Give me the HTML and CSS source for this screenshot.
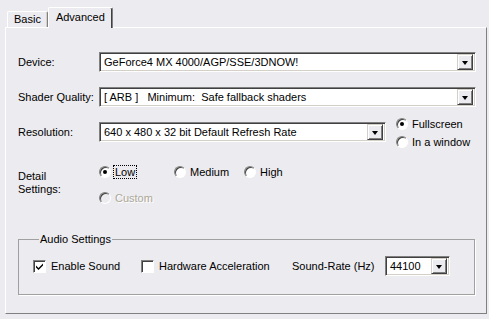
FILE: index.html
```html
<!DOCTYPE html>
<html lang="en">
<head>
  <meta charset="UTF-8" />
  <title>Advanced Settings</title>
  <link rel="stylesheet" href="styles.css">
</head>
<body>
  <div class="tabs">
    <div class="tab">Basic</div>
    <div class="tab active">Advanced</div>
  </div>
  <div class="panel">
    <div class="row first">
      <span class="label">Device:</span>
      <div class="combo wide"><span class="value">GeForce4 MX 4000/AGP/SSE/3DNOW!</span><span class="drop"></span></div>
    </div>
    <div class="row">
      <span class="label">Shader Quality:</span>
      <div class="combo wide"><span class="value">[ ARB ] &nbsp;&nbsp;Minimum: &nbsp;Safe fallback shaders</span><span class="drop"></span></div>
    </div>
    <div class="row res">
      <span class="label">Resolution:</span>
      <div class="combo mid"><span class="value">640 x 480 x 32 bit Default Refresh Rate</span><span class="drop"></span></div>
      <div class="mode">
        <label class="opt"><span class="radio on"></span>Fullscreen</label>
        <label class="opt"><span class="radio"></span>In a window</label>
      </div>
    </div>
    <div class="detail">
      <span class="label">Detail<br>Settings:</span>
      <div class="levels">
        <div class="level-row">
          <label class="opt low"><span class="radio on"></span><span class="focus">Low</span></label>
          <label class="opt med"><span class="radio"></span>Medium</label>
          <label class="opt"><span class="radio"></span>High</label>
        </div>
        <label class="opt disabled"><span class="radio"></span>Custom</label>
      </div>
    </div>
    <fieldset class="audio">
      <legend>Audio Settings</legend>
      <label class="check-opt sound"><span class="check on">
        <svg width="9" height="9" viewBox="0 0 9 9"><path d="M1 3.5 L3.5 6 L8 1.5 L8 3.5 L3.5 8 L1 5.5 Z" fill="#000"/></svg>
      </span>Enable Sound</label>
      <label class="check-opt hw"><span class="check"></span>Hardware Acceleration</label>
      <span class="rate-label">Sound-Rate (Hz)</span>
      <div class="combo small"><span class="value">44100</span><span class="drop"></span></div>
    </fieldset>
  </div>
</body>
</html>
```

FILE: styles.css
```css
body {
  margin: 0;
  background: #ecebef;
  font-family: Tahoma, "Liberation Sans", Arial, sans-serif;
  font-size: 11px;
  color: #000;
  width: 489px;
  height: 319px;
  overflow: hidden;
}
.tabs {
  display: flex;
  align-items: flex-end;
  height: 27px;
  padding-left: 7px;
}
.tab {
  height: 15px;
  padding: 0 6px;
  line-height: 15px;
  border: 1px solid #fff;
  border-bottom: none;
  border-right: 1px solid #808080;
  box-shadow: inset -1px 0 #d4d0c8;
  border-radius: 2px 2px 0 0;
  font-size: 11px;
}
.tab.active {
  height: 20px;
  line-height: 18px;
  padding: 0 7px 0 7px;
  margin-bottom: -1px;
  position: relative;
  background: #ecebef;
  box-shadow: inset -1px 0 #404040;
}
.panel {
  margin-left: 5px;
  width: 468px;
  height: 285px;
  border: 1px solid #fff;
  border-right-color: #808080;
  border-bottom-color: #808080;
  padding-left: 12px;
}
.row {
  display: flex;
  align-items: center;
  height: 20px;
  margin-top: 15px;
}
.row.first {
  margin-top: 24px;
}
.label {
  width: 81px;
  flex: none;
}
.combo {
  height: 20px;
  box-sizing: border-box;
  background: #fff;
  border: 1px solid;
  border-color: #808080 #fff #fff #808080;
  box-shadow: inset 1px 1px #404040, inset -1px -1px #d4d0c8;
  display: flex;
  align-items: center;
  padding: 2px;
  flex: none;
}
.combo.wide {
  width: 377px;
}
.combo.mid {
  width: 287px;
}
.combo.small {
  width: 65px;
}
.value {
  flex: 1;
  padding-left: 2px;
  white-space: nowrap;
  overflow: hidden;
}
.drop {
  width: 16px;
  height: 16px;
  box-sizing: border-box;
  background: #ecebef;
  border: 1px solid;
  border-color: #d4d0c8 #404040 #404040 #d4d0c8;
  box-shadow: inset 1px 1px #fff, inset -1px -1px #808080;
  position: relative;
}
.drop::after {
  content: "";
  position: absolute;
  left: 4px;
  top: 6px;
  border-left: 3.5px solid transparent;
  border-right: 3.5px solid transparent;
  border-top: 4px solid #000;
}
.mode {
  display: flex;
  flex-direction: column;
  gap: 5px;
  margin-left: 10px;
  margin-top: 1px;
}
.opt {
  display: flex;
  align-items: center;
  height: 13px;
}
.radio {
  width: 12px;
  height: 12px;
  box-sizing: border-box;
  border-radius: 50%;
  border: 1px solid;
  border-color: #808080 #fff #fff #808080;
  box-shadow: inset 1px 1px #404040;
  background: #fff;
  margin-right: 4px;
  position: relative;
  flex: none;
}
.radio.on::after {
  content: "";
  position: absolute;
  left: 3px;
  top: 3px;
  width: 4px;
  height: 4px;
  border-radius: 50%;
  background: #000;
}
.detail {
  display: flex;
  margin-top: 23px;
}
.detail .label {
  line-height: 13px;
  margin-top: 5px;
}
.levels {
  display: flex;
  flex-direction: column;
  gap: 13px;
}
.level-row {
  display: flex;
}
.low {
  width: 75px;
}
.med {
  width: 70px;
}
.focus {
  outline: 1px dotted #000;
  padding: 0 1px;
  margin-left: -1px;
}
.opt.disabled {
  color: #aca899;
  text-shadow: 1px 1px #fff;
}
.opt.disabled .radio {
  background: #ecebef;
}
.audio {
  margin: 29px 0 0 0;
  width: 457px;
  height: 62px;
  box-sizing: border-box;
  border: 1px solid #a0a0a0;
  box-shadow: 1px 1px #fff;
  padding: 0 0 7px 14px;
  display: flex;
  align-items: center;
}
.audio legend {
  padding: 0 1px;
  margin-left: 6px;
}
.check-opt {
  display: flex;
  align-items: center;
}
.check {
  width: 13px;
  height: 13px;
  box-sizing: border-box;
  border: 1px solid;
  border-color: #808080 #fff #fff #808080;
  box-shadow: inset 1px 1px #404040;
  background: #fff;
  margin-right: 5px;
  display: flex;
  align-items: center;
  justify-content: center;
}
.sound {
  width: 108px;
}
.hw {
  width: 151px;
}
.rate-label {
  width: 93px;
}
```
